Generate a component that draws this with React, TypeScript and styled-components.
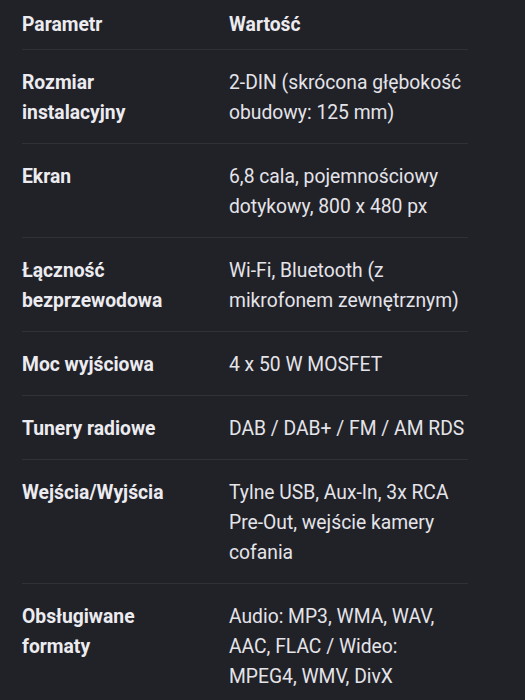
import React from "react";
import styled, { createGlobalStyle } from "styled-components";

const Global = createGlobalStyle`
  html, body {
    margin: 0;
    padding: 0;
    background: #212128;
  }
  body {
    font-family: Roboto, "Noto Sans", sans-serif;
    -webkit-font-smoothing: antialiased;
  }
`;

const Page = styled.div`
  padding: 0 57px 0 22px;
  background: #212128;
  min-height: 700px;
`;

const Table = styled.div`
  display: flex;
  flex-direction: column;
  width: 446px;
`;

const Row = styled.div<{ $head?: boolean }>`
  display: grid;
  grid-template-columns: 207px 1fr;
  padding: ${(p) => (p.$head ? "10px 0 9px" : "18px 0 15px")};
  border-bottom: 1px solid #303038;
  &:last-child {
    border-bottom: none;
  }
`;

const Label = styled.div`
  padding-right: 36px;
  font-size: 19.3px;
  line-height: 30px;
  font-weight: 700;
  color: #ececf0;
`;

const Value = styled.div<{ $head?: boolean }>`
  font-size: 19.3px;
  line-height: 30px;
  font-weight: ${(p) => (p.$head ? 700 : 400)};
  color: ${(p) => (p.$head ? "#ececf0" : "#e4e4e9")};
`;

const rows: [string, string][] = [
  ["Rozmiar instalacyjny", "2-DIN (skrócona głębokość obudowy: 125 mm)"],
  ["Ekran", "6,8 cala, pojemnościowy dotykowy, 800 x 480 px"],
  ["Łączność bezprzewodowa", "Wi-Fi, Bluetooth (z mikrofonem zewnętrznym)"],
  ["Moc wyjściowa", "4 x 50 W MOSFET"],
  ["Tunery radiowe", "DAB / DAB+ / FM / AM RDS"],
  ["Wejścia/Wyjścia", "Tylne USB, Aux-In, 3x RCA Pre-Out, wejście kamery cofania"],
  ["Obsługiwane formaty", "Audio: MP3, WMA, WAV, AAC, FLAC / Wideo: MPEG4, WMV, DivX"],
];

export default function App() {
  return (
    <>
      <Global />
      <Page>
        <Table>
          <Row $head>
            <Label>Parametr</Label>
            <Value $head>Wartość</Value>
          </Row>
          {rows.map(([k, v]) => (
            <Row key={k}>
              <Label>{k}</Label>
              <Value>{v}</Value>
            </Row>
          ))}
        </Table>
      </Page>
    </>
  );
}
